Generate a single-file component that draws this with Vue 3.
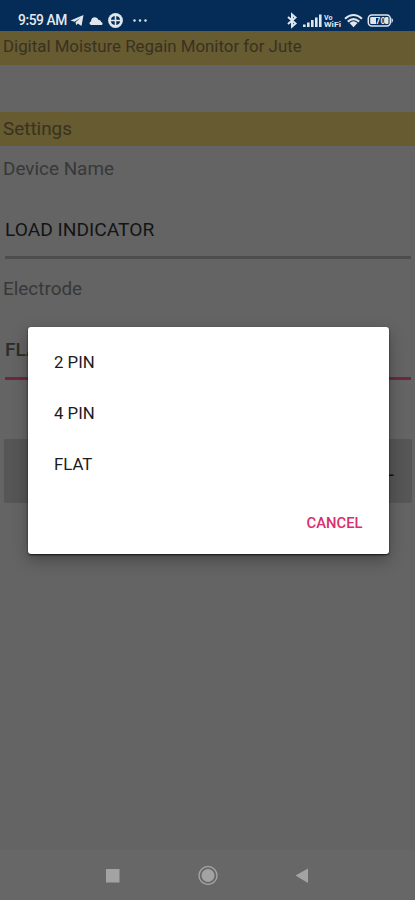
<script setup>
const options = ['2 PIN', '4 PIN', 'FLAT']
</script>

<template>
  <div class="screen">
    <header class="status">
      <span class="time">9:59 AM</span>
      <svg class="left-icons" width="80" height="18" viewBox="0 0 80 18">
        <path d="M.5 9.500 13.500 4 11.500 15 7.800 12.500 6.300 14.200 5.500 11.300 10.500 7 4.500 10.700z" />
        <path d="M21.500 14C19 14 19 11 21 10.600 20.800 5.500 27.200 5 28.500 9 31 9 31 10.600 31 10.900 33 11.200 33 14 31 14z" />
        <circle cx="45.500" cy="9.500" r="7.400" />
        <g class="cut">
          <path d="M44.700 5v3.700H41q.2-3.200 3.700-3.700M46.300 5v3.700H50Q49.800 5.500 46.300 5M44.700 14v-3.700H41q.2 3.200 3.700 3.700M46.300 14v-3.700H50q-.2 3.200-3.700 3.700" />
        </g>
        <circle cx="64.500" cy="9.500" r="1.200" />
        <circle cx="70" cy="9.500" r="1.200" />
        <circle cx="75.500" cy="9.500" r="1.200" />
      </svg>
      <svg class="right-icons" width="110" height="18" viewBox="0 0 110 18">
        <path class="line bluetooth" d="M3 6 10.500 12.500 7 15.500V3.500L10.500 6.500 3 13" />
        <g>
          <rect x="18" y="13.500" width="2.600" height="2.500" />
          <rect x="22" y="11.500" width="2.600" height="4.500" />
          <rect x="26" y="9" width="2.600" height="7" />
          <rect x="30" y="6.500" width="2.600" height="9.500" />
          <rect x="34" y="3.500" width="2.600" height="12.500" />
        </g>
        <text x="39" y="8.500" class="tiny">Vo</text>
        <text x="39" y="16" class="tiny" textLength="17" lengthAdjust="spacingAndGlyphs">WiFi</text>
        <path class="wifi" d="M60 7.700Q68.500.3 77 7.700M62.800 10.600Q68.500 5.500 74.200 10.600" />
        <path d="M64.500 12Q68.500 8.500 72.500 12L68.500 16.200z" />
        <rect class="line" x="83.300" y="4" width="22" height="11" rx="3.500" />
        <path d="M86.500 6h4.500v7h-4.500q-1.300 0-1.300-1.300V7.300Q85.200 6 86.500 6z" />
        <rect x="100" y="6" width="3.500" height="7" rx="1" />
        <path d="M106.500 6.800q3 2.700 0 5.400z" />
        <text x="90.500" y="12.800" class="level">70</text>
      </svg>
    </header>
    <h1 class="band title">Digital Moisture Regain Monitor for Jute</h1>
    <h2 class="band section">Settings</h2>
    <label class="label device">Device Name</label>
    <div class="field">LOAD INDICATOR</div>
    <label class="label electrode">Electrode</label>
    <div class="field active">FLAT</div>
    <div class="button">L</div>

    <nav class="nav">
      <svg width="415" height="50" viewBox="0 0 415 50">
        <rect x="106" y="19" width="13.500" height="13.500" />
        <circle cx="208" cy="25.500" r="6.500" />
        <circle cx="208" cy="25.500" r="9" class="ring" />
        <path d="M295.500 25.500 308 18.500v14.500z" />
      </svg>
    </nav>

    <section class="dialog" role="dialog">
      <ul>
        <li v-for="option in options" :key="option">{{ option }}</li>
      </ul>
      <button class="cancel">CANCEL</button>
    </section>
  </div>
</template>

<style>
body {
  background: #646464;
}
</style>

<style scoped>
.screen {
  position: relative;
  box-sizing: border-box;
  display: flex;
  flex-direction: column;
  width: 415px;
  height: 900px;
  overflow: hidden;
  background: #646464;
  font-family: Roboto, sans-serif;
}
.status {
  display: flex;
  align-items: center;
  height: 31px;
  box-sizing: border-box;
  padding: 8px 20px 0 18px;
  background: #052c56;
  color: #e4e9ef;
}
.time {
  width: 52px;
  font-size: 13.8px;
  font-weight: 500;
  letter-spacing: -0.4px;
  white-space: nowrap;
}
.status svg {
  fill: #e0e6ed;
}
.right-icons {
  margin-left: auto;
}
.status .cut {
  fill: #052c56;
}
.status .line,
.status .wifi {
  fill: none;
  stroke: #e0e6ed;
  stroke-width: 1.5;
}
.status .bluetooth {
  stroke-width: 2;
}
.status .wifi {
  stroke-width: 2.1;
}
.tiny {
  font-size: 7px;
  font-weight: 700;
}
.level {
  font-size: 8.5px;
  font-weight: 700;
}
.band {
  flex: none;
  margin: 0;
  padding-left: 3px;
  height: 34px;
  box-sizing: border-box;
  background: #665b31;
  color: #39321f;
  font-weight: 400;
  white-space: nowrap;
}
.title {
  font-size: 16.85px;
  line-height: 31px;
}
.section {
  margin-top: 47px;
  font-size: 18.9px;
  line-height: 33px;
}
.label {
  padding-left: 3px;
  font-size: 18.9px;
  line-height: 24px;
  color: #383838;
}
.device {
  margin-top: 11px;
}
.field {
  height: 43px;
  margin: 35px 4px 0 5px;
  box-sizing: border-box;
  border-bottom: 3px solid #4d4d4d;
  font-size: 19.2px;
  line-height: 28px;
  color: #141414;
}
.electrode {
  margin-top: 18px;
}
.field.active {
  height: 44px;
  border-bottom: 3px solid #6b2941;
  color: #2c2c2c;
  font-weight: 500;
}
.button {
  height: 64px;
  margin: 59px 3px 0 4px;
  padding-right: 18px;
  box-sizing: border-box;
  border-radius: 2px;
  background: #565656;
  color: #111;
  font-size: 16px;
  font-weight: 500;
  line-height: 64px;
  text-align: right;
}
.nav {
  height: 50px;
  margin-top: auto;
  background: #676767;
}
.nav svg {
  display: block;
  fill: #a3a3a3;
}
.nav .ring {
  fill: none;
  stroke: #a3a3a3;
  stroke-width: 1.4;
}
.dialog {
  position: absolute;
  left: 28px;
  top: 327px;
  width: 360.5px;
  height: 227px;
  box-sizing: border-box;
  display: flex;
  flex-direction: column;
  padding: 10px 26px;
  border-radius: 3px;
  background: #fff;
  box-shadow: 0 1px 2px rgba(0, 0, 0, 0.75), 0 6px 16px rgba(0, 0, 0, 0.3);
}
ul {
  margin: 0;
  padding: 0;
  list-style: none;
}
li {
  height: 51px;
  font-size: 16.8px;
  line-height: 50px;
  color: #1c1c1c;
}
.cancel {
  align-self: flex-end;
  margin: 19px 0 0;
  padding: 0;
  border: 0;
  background: none;
  color: #db2d6b;
  font: 500 14.8px/28px Roboto, sans-serif;
}
</style>
